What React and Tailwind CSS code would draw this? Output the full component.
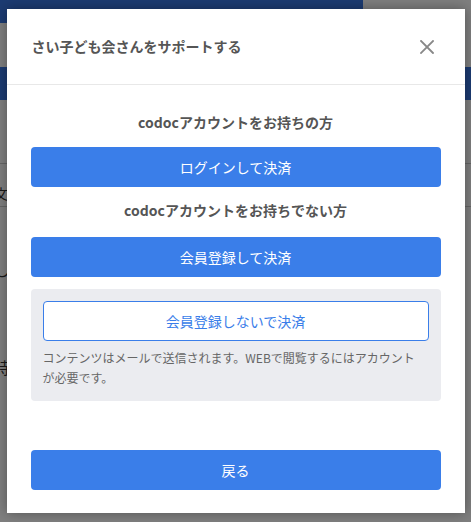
import React from 'react';

const font = { fontFamily: '"Noto Sans CJK JP", "Noto Sans", sans-serif' };

function BackgroundPage() {
  return (
    <div className="w-[471px] h-[522px] bg-white text-[#333]">
      <div className="h-[23px] w-[363px] bg-[#3876e4]" />
      <div className="h-[44px]" />
      <div className="h-[33px] w-full bg-[#3876e4]" />
      <div className="h-[63px]" />
      <div className="h-[44px] border-y border-[#ccc] -ml-[6px] flex items-end pb-[2px] text-[14px]">文字</div>
      <div className="h-[50px]" />
      <div className="-ml-[6px] text-[16px]">し</div>
      <div className="h-[74px]" />
      <div className="-ml-[6px] text-[16px]">持</div>
    </div>
  );
}

export default function App() {
  return (
    <div className="relative w-[471px] h-[522px] overflow-hidden" style={font}>
      <BackgroundPage />
      <div className="absolute inset-0 bg-black/50 flex items-center justify-center">
        <div className="w-[458px] h-[504px] bg-white shadow-[0_0_12px_rgba(0,0,0,0.35)] flex flex-col">
          {/* header */}
          <div className="h-[76px] flex-none flex items-center justify-between pl-[25px] pr-[31px] border-b border-[#e8e8e8]">
            <h2 className="text-[14px] font-bold text-[#555]">さい子ども会さんをサポートする</h2>
            <svg width="14" height="14" viewBox="0 0 14 14" className="text-[#888]">
              <path d="M1 1 L13 13 M13 1 L1 13" stroke="currentColor" strokeWidth="1.8" strokeLinecap="square" />
            </svg>
          </div>

          {/* body */}
          <div className="flex-1 flex flex-col px-[24px] pt-[27px] pb-[23px]">
            <p className="h-5 leading-5 text-center text-[14px] font-bold text-[#555]">codocアカウントをお持ちの方</p>
            <button className="mt-[15px] h-[40px] rounded-[4px] bg-[#3a7ee9] text-white text-[14px]">ログインして決済</button>
            <p className="mt-[13px] h-5 leading-5 text-center text-[14px] font-bold text-[#555]">codocアカウントをお持ちでない方</p>
            <button className="mt-[17px] h-[40px] rounded-[4px] bg-[#3a7ee9] text-white text-[14px]">会員登録して決済</button>

            <div className="mt-[12px] rounded-[4px] bg-[#ebecf0] px-[12px] pt-[12px] pb-[13px]">
              <button className="w-full h-[40px] rounded-[4px] bg-white border border-[#3a7ee9] text-[#3a7ee9] text-[14px]">会員登録しないで決済</button>
              <p className="mt-[7px] text-[12px] leading-5 text-[#666]">
                コンテンツはメールで送信されます。WEBで閲覧するにはアカウント
                <br />
                が必要です。
              </p>
            </div>

            <div className="flex-1" />
            <button className="h-[40px] rounded-[4px] bg-[#3a7ee9] text-white text-[14px]">戻る</button>
          </div>
        </div>
      </div>
    </div>
  );
}
